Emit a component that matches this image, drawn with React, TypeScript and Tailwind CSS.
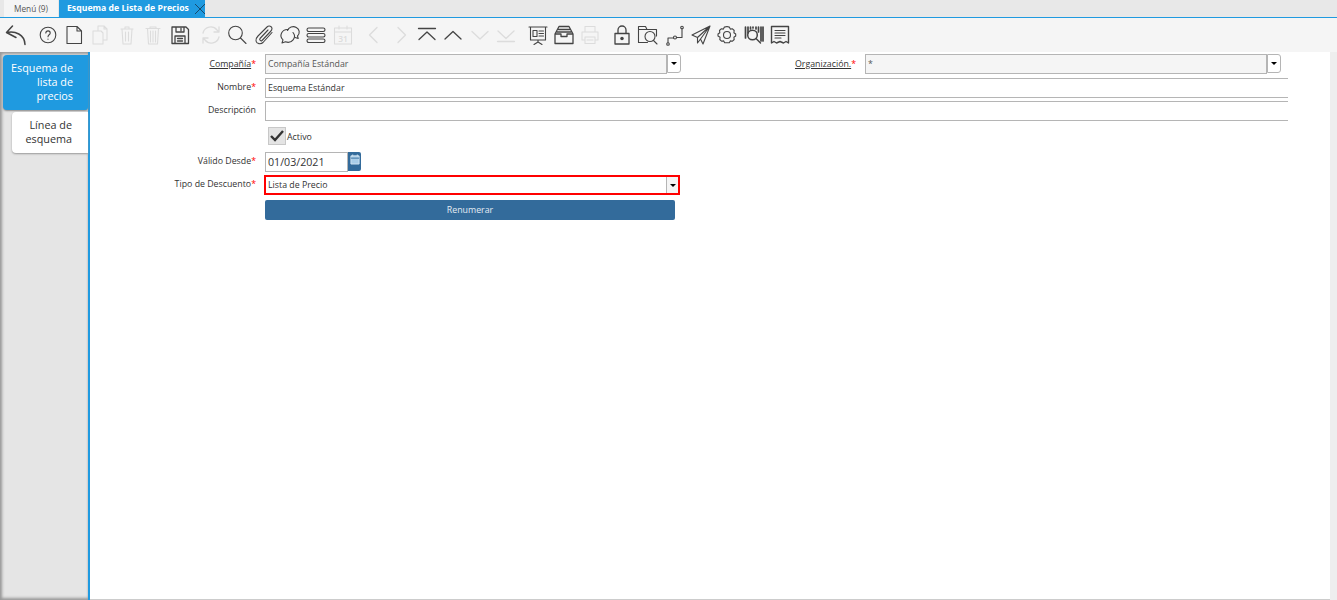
import React from "react";

const font = "font-['Open_Sans',sans-serif]";

type IconProps = { dim?: boolean; children: React.ReactNode };

const Tool = ({ dim, children }: IconProps) => (
  <div className="w-[26.4px] h-[34px] flex items-center justify-center shrink-0">
    <svg
      viewBox="0 0 24 24"
      className={dim ? "w-[24px] h-[24px] text-[#dcdcdc]" : "w-[24px] h-[24px] text-[#444444]"}
      fill="none"
      stroke="currentColor"
      strokeWidth="1.1"
      strokeLinecap="round"
      strokeLinejoin="round"
    >
      {children}
    </svg>
  </div>
);

const Chevron = ({ d, dim }: { d: string; dim?: boolean }) => (
  <Tool dim={dim}>
    <path d={d} strokeWidth="1.3" />
  </Tool>
);

const Toolbar = () => (
  <div className="h-[34px] bg-[#f5f5f5] flex items-center pl-[3px] gap-[5px]">
    <div className="flex">
      <Tool>
        <path d="M8.500 3 2.500 9.500 12 14.500M3 9.500C11 8 20.500 11 21 21.500" strokeWidth="1.500" />
      </Tool>
    </div>
    <div className="flex">
      <Tool>
        <circle cx="12" cy="12" r="7.800" />
        <path d="M9.800 10c.2-2.800 4.400-2.800 4.400 0 0 1.900-2.200 1.700-2.200 3.800M12 16v.3" />
      </Tool>
      <Tool>
        <path d="M5 3.500h10l4.500 4.500v12.500H5zM15 3.500V8h4.500" />
      </Tool>
      <Tool dim>
        <path d="M5 8h8l2 2v11H5zM10 8V3h6l3 3v11h-4M16 3v3h3" />
      </Tool>
      <Tool dim>
        <path d="M6 6h12M10 6V4h4v2M7 6l1 15h8l1-15M10.500 9v9M13.500 9v9" />
      </Tool>
      <Tool dim>
        <path d="M5 5.500h14M9 5.500V4h6v1.500M6.500 5.500 7.500 21h9l1-15.500M9.500 8v11M12 8v11M14.500 8v11" />
      </Tool>
      <Tool>
        <path d="M4 4h14l2.500 2.500v14H4zM8 4v5h8V4M13 5.500v2M7 20.500V13h10v7.500M9.500 15.500h5M9.500 18h5" strokeWidth="1.300" />
      </Tool>
    </div>
    <div className="flex">
      <Tool dim>
        <path d="M4 10a8 8 0 0 1 14-3l2 2M20 4v5h-5M20 14a8 8 0 0 1-14 3l-2-2M4 20v-5h5" strokeWidth="1.300" />
      </Tool>
      <Tool>
        <circle cx="10.500" cy="10" r="6.800" />
        <path d="m15.500 15 5.500 5.500" />
      </Tool>
      <Tool>
        <path d="M20 9.500 11 19.500c-2 2-6.500 1.500-7-1.500-.4-2 .5-3.500 2-5L15 4c2-2 5-.5 5 1.500 0 1-.5 2-1.500 3L10 17.500c-1 1-3-.5-2-2l8-8.500" />
      </Tool>
      <Tool>
        <path d="M10 6.500a6.500 6 0 0 0-5 10.300L4 20l3.500-1.200a6.500 6 0 0 0 7.500-9.300" />
        <path d="M9.500 7.500a6 5.500 0 1 1 10 5.500l.7 2.500-3-1" />
      </Tool>
      <Tool>
        <rect x="3" y="5" width="18" height="3.500" rx="1.700" />
        <rect x="3" y="10.500" width="18" height="3.500" rx="1.700" />
        <rect x="3" y="16" width="18" height="3.500" rx="1.700" />
      </Tool>
      <Tool dim>
        <path d="M3.500 5h17v16h-17zM3.500 9h17M8 3v3M16 3v3" />
        <text x="12" y="19" fontSize="8.500" textAnchor="middle" fill="currentColor" stroke="none" fontFamily="Open Sans, sans-serif" fontWeight="600">31</text>
      </Tool>
    </div>
    <div className="flex">
      <Chevron dim d="M15 4.500 7.500 12l7.500 7.500" />
      <Chevron dim d="m9 4.500 7.500 7.500L9 19.500" />
      <Chevron d="M3.500 5.500h17M4 16.500 12 9l8 7.500" />
      <Chevron d="M4 16 12 8.500l8 7.500" />
      <Chevron dim d="m4 8.500 8 7.500 8-7.500" />
      <Chevron dim d="m4 8 8 7.500L20 8M3.500 18.500h17" />
    </div>
    <div className="flex">
      <Tool>
        <path d="M3 4h18M4.500 4v13h15V4M12 17v2M12 19l-4 2.500M12 19l4 2.500M7 7.500h4v6H7zM13 8h4.500M13 10.500h4.500M13 13h4.500" />
      </Tool>
      <Tool>
        <path d="M7 3.500h10L21 11v9.500H3V11zM6.500 6.500h11M5 9h14M3 11h6v2.500h6V11h6" strokeWidth="1.300" />
      </Tool>
      <Tool dim>
        <path d="M7 9V3.500h10V9M4 9h16v8h-3M7 17H4V9M7 14h10v6.500H7zM9 17h6" />
      </Tool>
    </div>
    <div className="flex">
      <Tool>
        <path d="M5 10.500h14v10.500H5zM8 10.500V7a4 4 0 0 1 8 0v3.500" strokeWidth="1.300" />
        <circle cx="12" cy="15.500" r="1.200" fill="currentColor" />
      </Tool>
      <Tool>
        <path d="M20.500 13V6.500H11L9.500 3.500h-7v16h9M3 6.500h8" />
        <circle cx="14" cy="13.500" r="5" />
        <path d="m17.500 17.500 3.500 3.500" />
      </Tool>
      <Tool>
        <path d="M5 19.500v-4.500h5.500M13.500 14.500h5.500V6" />
        <circle cx="5" cy="21" r="1.300" />
        <circle cx="12" cy="14.500" r="1.500" />
        <circle cx="19" cy="4.500" r="1.300" />
      </Tool>
      <Tool>
        <path d="M21 3 3 12l5.500 2.500L21 3l-9.500 13 2.500 5 7-18zM8.500 14.500V20l3-4" />
      </Tool>
      <Tool>
        <path d="M12 3.500l2.300.6 1 2 2.200-.3 1.700 1.700-.3 2.200 1.800 1.300v2l-1.800 1.300.3 2.200-1.700 1.700-2.200-.3-1 1.900h-4.600l-1-1.900-2.200.3-1.700-1.700.3-2.200L3 13v-2l1.800-1.300-.3-2.200 1.700-1.700 2.200.3 1-2z" />
        <circle cx="12" cy="12" r="3.500" />
      </Tool>
      <Tool>
        <path d="M3.500 4v11M6 4v6M8.500 4v2M11 4v1M14 4v2M16.500 4v5M19 4v14M21 4v14" strokeWidth="1.700" />
        <circle cx="10.500" cy="12" r="4.800" strokeWidth="1.500" />
        <path d="m14 15.500 4.500 4.500" strokeWidth="1.400" />
      </Tool>
      <Tool>
        <path d="M3.500 3.500h17v16.500l-2.500-1.500-2.500 1.500-3.500-1.500-3.500 1.500-2.500-1.500-2.500 1.500z" strokeWidth="1.400" />
        <path d="M7 7.500h10M7 10h10M7 12.500h10M7 15h6" />
      </Tool>
    </div>
  </div>
);

const Label = ({ text, underline, width = "w-[166px]" }: { text: string; underline?: boolean; width?: string }) => (
  <div className={`${width} shrink-0 text-right text-[8.8px] leading-[14px] text-[#333333]`}>
    <span className={underline ? "underline" : ""}>{text}</span>
    {underline !== undefined && <span className="text-[#ff0000]">*</span>}
  </div>
);

const Caret = ({ red }: { red?: boolean }) => (
  <div
    className={
      red
        ? "w-[12px] h-full bg-[#f5f5f5] border-l border-[#b5b5b5] flex items-center justify-center shrink-0"
        : "w-[14px] h-[19px] bg-white border border-[#b5b5b5] rounded-r-[3px] flex items-center justify-center shrink-0"
    }
  >
    <div className="w-0 h-0 border-l-[3px] border-r-[3px] border-t-[3px] border-l-transparent border-r-transparent border-t-black" />
  </div>
);

const ComboReadOnly = ({ value }: { value: string }) => (
  <div className="flex w-[416px] shrink-0">
    <div className="w-[402px] h-[20px] bg-[#f5f5f5] border border-[#b5b5b5] px-[2px] text-[8.8px] leading-[18px] text-[#555555]">
      {value}
    </div>
    <Caret />
  </div>
);

export default function App() {
  return (
    <div className={`${font} w-[1337px] h-[600px] overflow-hidden bg-white flex flex-col`}>
      {/* tabs */}
      <div className="h-[18px] bg-[#e8e8e8] border-b border-[#1f9ae0] flex items-end pl-[4px] gap-[1px] shrink-0">
        <div className="w-[54px] h-[17px] bg-[#f5f5f5] text-[8.3px] leading-[17px] text-center text-[#555555]">Menú (9)</div>
        <div className="w-[146px] h-[17px] bg-[#1f9ae0] flex items-center pl-[8px] justify-between">
          <span className="text-[8.7px] font-bold text-white leading-[17px]">Esquema de Lista de Precios</span>
          <svg viewBox="0 0 12 12" className="w-[12px] h-[12px] mr-[-1px] text-[#174a6c]" fill="none" stroke="currentColor" strokeWidth="1">
            <path d="m1 1 10 10M11 1 1 11" />
          </svg>
        </div>
      </div>

      <Toolbar />

      <div className="flex-1 flex min-h-0">
        {/* side tabs */}
        <div className="w-[90px] shrink-0 bg-[#e5e5e5] border-r-[2px] border-[#1f9ae0] shadow-[inset_3px_0_3px_-1px_#9a9a9a,inset_0_3px_3px_-1px_#9a9a9a,inset_0_-3px_3px_-1px_#9a9a9a] pt-[3px] flex flex-col items-end text-[10.8px] leading-[14px] text-right">
          <div className="w-[85px] h-[55px] bg-[#1f9ae0] text-white rounded-l-[4px] rounded-br-[3px] pt-[6px] pr-[15px] pl-[6px] shadow-[0_1px_2px_#888888]">
            Esquema de lista de precios
          </div>
          <div className="w-[76px] h-[41px] mt-[2px] bg-white text-[#333333] rounded-l-[4px] pt-[6px] pr-[16px] pl-[10px] shadow-[0_1px_2px_#999999]">
            Línea de esquema
          </div>
        </div>

        {/* form */}
        <div className="flex-1 flex flex-col pt-[2px] border-b border-[#cccccc]">
          <div className="flex items-start gap-[9px]">
            <div className="pt-[3px]"><Label text="Compañía" underline /></div>
            <ComboReadOnly value="Compañía Estándar" />
            <div className="pt-[3px] ml-[-9px]"><Label text="Organización." underline width="w-[175px]" /></div>
            <ComboReadOnly value="*" />
          </div>
          <div className="flex items-start gap-[9px] mt-[4px]">
            <div className="pt-[2px]"><Label text="Nombre" underline={false} /></div>
            <div className="w-[1023px] h-[20px] border-y border-l border-[#b5b5b5] px-[2px] text-[8.8px] leading-[18px] text-[#333333]">Esquema Estándar</div>
          </div>
          <div className="flex items-start gap-[9px] mt-[3px]">
            <div className="pt-[2px]"><Label text="Descripción" /></div>
            <div className="w-[1023px] h-[20px] border-y border-l border-[#b5b5b5]" />
          </div>
          <div className="flex items-center gap-[1px] ml-[178px] mt-[6px] h-[18px]">
            <div className="w-[18px] h-[18px] bg-[#e4e4e4] border border-[#c8c8c8] flex items-center justify-center">
              <svg viewBox="0 0 16 16" className="w-[16px] h-[16px]" fill="none" stroke="#333333" strokeWidth="2.400">
                <path d="m2 8 4 4 8-9" />
              </svg>
            </div>
            <span className="text-[8.8px] leading-[20px] pt-[1px] text-[#333333]">Activo</span>
          </div>
          <div className="flex items-start gap-[9px] mt-[7px]">
            <div className="pt-[2px]"><Label text="Válido Desde" underline={false} /></div>
            <div className="flex">
              <div className="w-[83px] h-[20px] border border-[#b5b5b5] px-[2px] text-[10.67px] leading-[18px] text-[#333333]">01/03/2021</div>
              <div className="w-[13px] h-[19px] bg-[#336b9b] rounded-r-[2px] flex items-start justify-center pt-[2px]">
                <svg viewBox="0 0 11 12" className="w-[10px] h-[11px]" fill="#a9cde8" stroke="#d5e6f3" strokeWidth="1">
                  <path d="M1 2h9v9H1zM3 .5v2M8 .5v2" />
                  <path d="M1 4.500h9" stroke="#336b9b" />
                </svg>
              </div>
            </div>
          </div>
          <div className="flex items-start gap-[8px] mt-[3px]">
            <div className="pt-[2px]"><Label text="Tipo de Descuento" underline={false} /></div>
            <div className="w-[416px] h-[20px] border-[2px] border-[#ff0000] flex pl-[2px] text-[8.8px] leading-[16px] text-[#333333] justify-between">
              <span>Lista de Precio</span>
              <Caret red />
            </div>
          </div>
          <div className="ml-[175px] mt-[5px] w-[410px] h-[20px] bg-[#336b9b] rounded-[2px] text-[8.8px] leading-[20px] text-center text-[#e4ecf3]">
            Renumerar
          </div>
        </div>

        <div className="w-[7px] shrink-0 bg-[#eeeeee]" />
      </div>
    </div>
  );
}
